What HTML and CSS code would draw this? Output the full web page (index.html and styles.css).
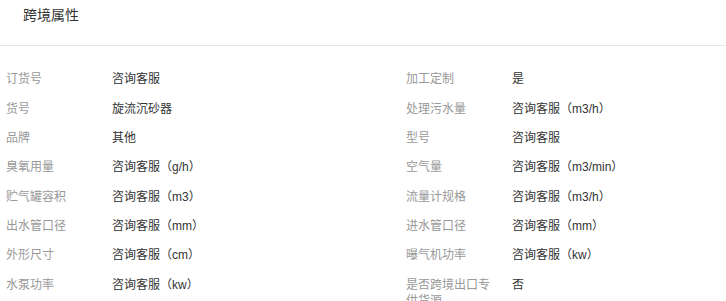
FILE: index.html
```html
<!DOCTYPE html>
<html lang="zh-CN">
<head>
<meta charset="utf-8">
<title>跨境属性</title>
<link rel="stylesheet" href="styles.css">
</head>
<body>
<div class="panel">
  <div class="panel-head">跨境属性</div>
  <div class="attrs">
    <div class="attr"><div class="label">订货号</div><div class="value">咨询客服</div></div>
    <div class="attr"><div class="label">加工定制</div><div class="value">是</div></div>
    <div class="attr"><div class="label">货号</div><div class="value">旋流沉砂器</div></div>
    <div class="attr"><div class="label">处理污水量</div><div class="value">咨询客服（m3/h）</div></div>
    <div class="attr"><div class="label">品牌</div><div class="value">其他</div></div>
    <div class="attr"><div class="label">型号</div><div class="value">咨询客服</div></div>
    <div class="attr"><div class="label">臭氧用量</div><div class="value">咨询客服（g/h）</div></div>
    <div class="attr"><div class="label">空气量</div><div class="value">咨询客服（m3/min）</div></div>
    <div class="attr"><div class="label">贮气罐容积</div><div class="value">咨询客服（m3）</div></div>
    <div class="attr"><div class="label">流量计规格</div><div class="value">咨询客服（m3/h）</div></div>
    <div class="attr"><div class="label">出水管口径</div><div class="value">咨询客服（mm）</div></div>
    <div class="attr"><div class="label">进水管口径</div><div class="value">咨询客服（mm）</div></div>
    <div class="attr"><div class="label">外形尺寸</div><div class="value">咨询客服（cm）</div></div>
    <div class="attr"><div class="label">曝气机功率</div><div class="value">咨询客服（kw）</div></div>
    <div class="attr"><div class="label">水泵功率</div><div class="value">咨询客服（kw）</div></div>
    <div class="attr"><div class="label">是否跨境出口专供货源</div><div class="value">否</div></div>
  </div>
</div>
</body>
</html>
```

FILE: styles.css
```css
html, body {
  margin: 0;
  padding: 0;
  background: #fff;
  overflow: hidden;
}
body {
  font-family: "Liberation Sans", Arial, "Noto Sans CJK SC", sans-serif;
  color: #333;
}
.panel {
  width: 100%;
}
.panel-head {
  height: 46px;
  box-sizing: border-box;
  padding: 5px 0 0 23px;
  font-size: 14px;
  line-height: 20px;
  color: #333;
  border-bottom: 1px solid #e6e6e6;
}
.attrs {
  display: grid;
  grid-template-columns: 400px 1fr;
  padding-top: 18.5px;
}
.attr {
  display: flex;
  align-items: flex-start;
  padding: 6.7px 0 6.7px 6px;
  font-size: 12px;
  line-height: 16px;
}
.label {
  flex: none;
  width: 90px;
  padding-right: 16px;
  color: #999;
}
.value {
  color: #333;
}
```
